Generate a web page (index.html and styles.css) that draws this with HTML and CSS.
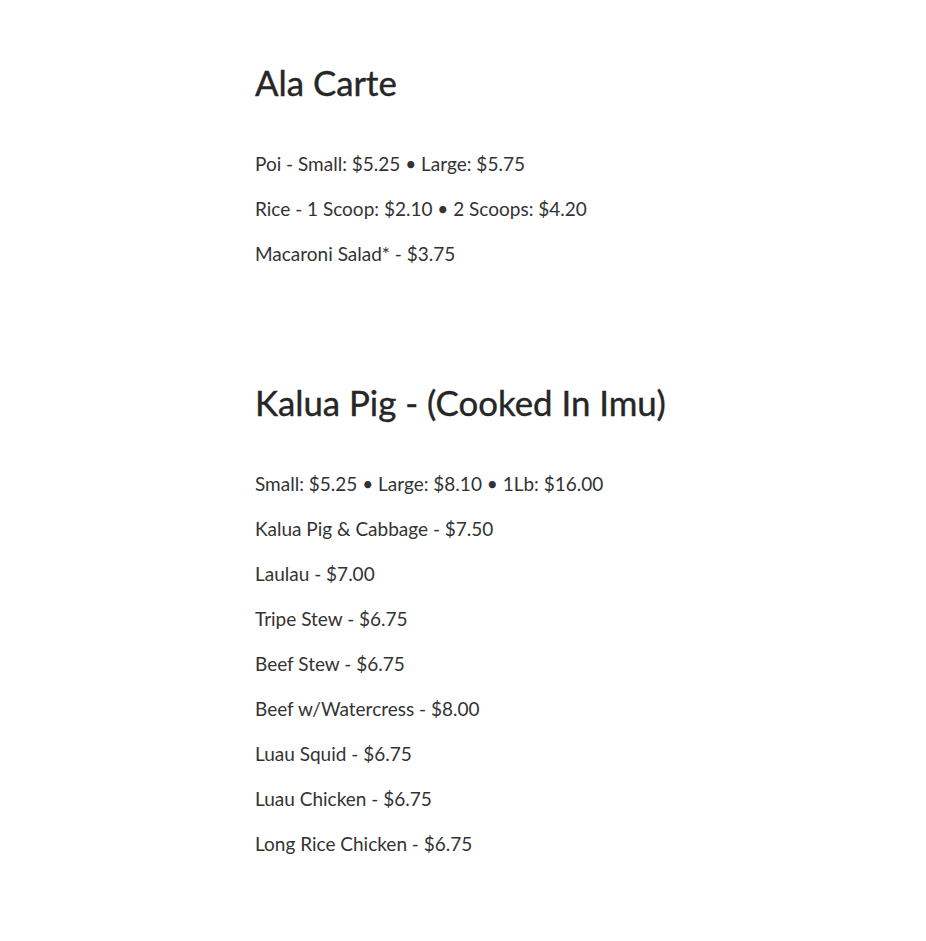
FILE: index.html
```html
<!doctype html>
<html lang="en">
  <head>
    <meta charset="UTF-8" />
    <meta name="viewport" content="width=device-width, initial-scale=1.0" />
    <title>Menu</title>
    <link rel="stylesheet" href="styles.css">
  </head>
  <body>
    <div class="menu">
      <section class="menu-section">
        <h2>Ala Carte</h2>
        <p>Poi - Small: $5.25 &bull; Large: $5.75</p>
        <p>Rice - 1 Scoop: $2.10 &bull; 2 Scoops: $4.20</p>
        <p>Macaroni Salad* - $3.75</p>
      </section>

      <section class="menu-section">
        <h2>Kalua Pig - (Cooked In Imu)</h2>
        <p>Small: $5.25 &bull; Large: $8.10 &bull; 1Lb: $16.00</p>
        <p>Kalua Pig &amp; Cabbage - $7.50</p>
        <p>Laulau - $7.00</p>
        <p>Tripe Stew - $6.75</p>
        <p>Beef Stew - $6.75</p>
        <p>Beef w/Watercress - $8.00</p>
        <p>Luau Squid - $6.75</p>
        <p>Luau Chicken - $6.75</p>
        <p>Long Rice Chicken - $6.75</p>
      </section>
    </div>
  </body>
</html>
```

FILE: styles.css
```css
* {
  margin: 0;
  padding: 0;
  box-sizing: border-box;
}

body {
  background: #ffffff;
  color: #333333;
  font-family: "Lato", "Open Sans", sans-serif;
}

.menu {
  width: 416px;
  margin: 0 auto;
  padding-top: 61px;
}

.menu-section + .menu-section {
  margin-top: 114px;
}

.menu-section h2 {
  font-size: 34.8px;
  font-weight: 400;
  line-height: 44px;
  margin-bottom: 45px;
  color: #262626;
  white-space: nowrap;
  -webkit-text-stroke: 0.4px #262626;
}

.menu-section p {
  font-size: 19px;
  line-height: 27px;
  margin-bottom: 18px;
}
```
